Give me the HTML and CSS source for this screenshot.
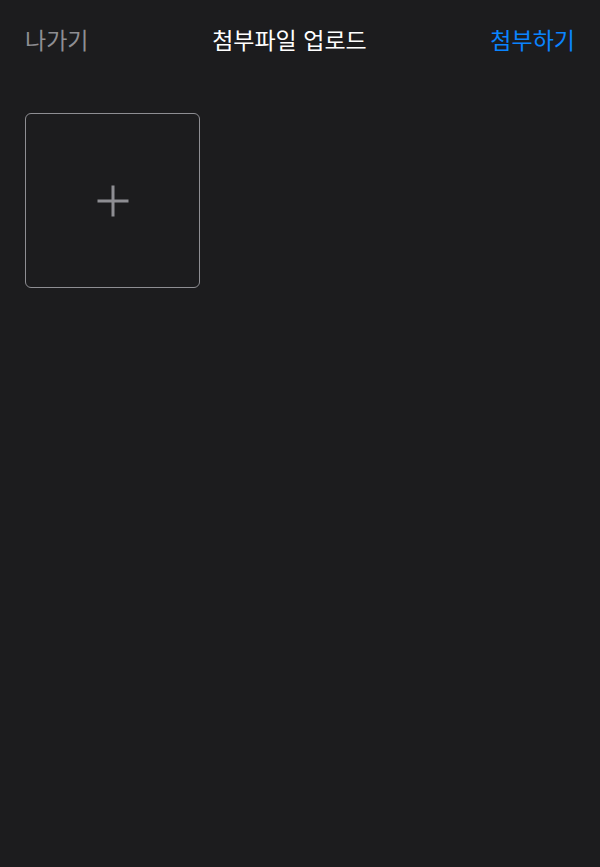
FILE: index.html
```html
<!DOCTYPE html>
<html lang="ko">
<head>
    <meta charset="UTF-8">
    <meta name="viewport" content="width=device-width, initial-scale=1.0">
    <title>첨부파일 업로드</title>
    <link rel="stylesheet" href="styles.css">
</head>
<body>
    <div class="screen">
        <header class="nav">
            <button class="nav-btn nav-back">나가기</button>
            <h1 class="nav-title">첨부파일 업로드</h1>
            <button class="nav-btn nav-done">첨부하기</button>
        </header>

        <div class="grid">
            <button class="add-tile" aria-label="파일 추가">
                <svg width="32" height="32" viewBox="0 0 32 32">
                    <path d="M0.5 16 H31.5 M16 0.5 V31.5" stroke="#8e8e93" stroke-width="3" fill="none"/>
                </svg>
            </button>
        </div>
    </div>
</body>
</html>
```

FILE: styles.css
```css
html, body {
    margin: 0;
    padding: 0;
    background-color: #1c1c1e;
}

body {
    font-family: "Noto Sans CJK KR", "Noto Sans", sans-serif;
    color: #ffffff;
}

.screen {
    min-height: 867px;
}

.nav {
    display: flex;
    align-items: center;
    justify-content: space-between;
    height: 78px;
    padding: 0 25px;
    box-sizing: border-box;
}

.nav-btn {
    background: none;
    border: none;
    padding: 0;
    font-family: inherit;
    font-size: 23px;
    line-height: 1;
    cursor: pointer;
}

.nav-back {
    color: #8e8e93;
}

.nav-done {
    color: #0a84ff;
}

.nav-title {
    margin: 0;
    font-size: 23px;
    line-height: 1;
    font-weight: normal;
    color: #ffffff;
}

.grid {
    display: grid;
    grid-template-columns: repeat(3, 175px);
    gap: 12px;
    padding: 35px 25px 0;
}

.add-tile {
    width: 175px;
    height: 175px;
    display: flex;
    align-items: center;
    justify-content: center;
    background: transparent;
    border: 1.5px solid #8e8e93;
    border-radius: 6px;
    padding: 0;
    cursor: pointer;
}
```
